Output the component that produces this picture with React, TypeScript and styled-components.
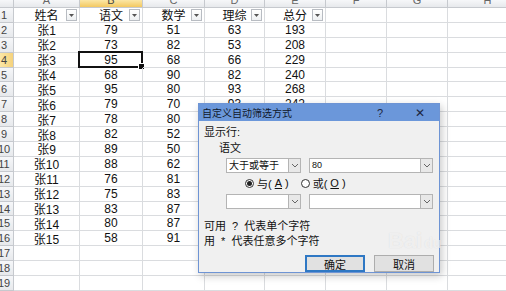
import React from 'react';
import styled, {createGlobalStyle, css} from 'styled-components';

const COLS = [66, 63, 62, 60, 61, 61, 61, 80];
const LETTERS = ['A', 'B', 'C', 'D', 'E', 'F', 'G', 'H'];
const HEADERS = ['姓名', '语文', '数学', '理综', '总分'];
const DATA = [
  ['张1', '79', '51', '63', '193'],
  ['张2', '73', '82', '53', '208'],
  ['张3', '95', '68', '66', '229'],
  ['张4', '68', '90', '82', '240'],
  ['张5', '95', '80', '93', '268'],
  ['张6', '79', '70', '93', '242'],
  ['张7', '78', '80', '', ''],
  ['张8', '82', '52', '', ''],
  ['张9', '89', '50', '', ''],
  ['张10', '88', '62', '', ''],
  ['张11', '76', '81', '', ''],
  ['张12', '75', '83', '', ''],
  ['张13', '83', '87', '', ''],
  ['张14', '80', '87', '', ''],
  ['张15', '58', '91', '', ''],
  ['', '', '', '', ''],
  ['', '', '', '', ''],
  ['', '', '', '', ''],
];
const ACTIVE_ROW = 4;
const ACTIVE_COL = 1;

export default function App() {
  const rows = [HEADERS, ...DATA];

  return (
    <Page>
      <GlobalStyle/>
      <Sheet>
        <Corner/>
        {LETTERS.map((l, i) => (
          <ColHead key={l} $active={i === ACTIVE_COL}><span>{l}</span></ColHead>
        ))}
        {rows.map((row, r) => (
          <React.Fragment key={r}>
            <RowHead $active={r + 1 === ACTIVE_ROW}><span>{r + 1}</span></RowHead>
            {LETTERS.map((_, c) => {
              const text = row[c] ?? '';
              const active = r + 1 === ACTIVE_ROW && c === ACTIVE_COL;
              return (
                <Cell key={c}>
                  {text}
                  {r === 0 && c < 5 && (
                    <FilterButton>
                      <svg width="5" height="3" viewBox="0 0 5 3"><path d="M0 0h5L2.5 3z" fill="#555"/></svg>
                    </FilterButton>
                  )}
                  {active && <Selection><Handle/></Selection>}
                </Cell>
              );
            })}
          </React.Fragment>
        ))}
      </Sheet>

      <Dialog>
        <TitleBar>
          <Title>自定义自动筛选方式</Title>
          <TitleBtn $w={42}>?</TitleBtn>
          <TitleBtn $w={38} $close>✕</TitleBtn>
        </TitleBar>
        <Body>
          <Label>显示行:</Label>
          <FieldName>语文</FieldName>
          <ConditionRow>
            <Combo $w={75}><ComboText>大于或等于</ComboText><Drop/></Combo>
            <Combo $w={124}><ComboText $small>80</ComboText><Drop/></Combo>
          </ConditionRow>
          <RadioRow>
            <RadioOption><Radio $checked/>与(<u>A</u>)</RadioOption>
            <RadioOption><Radio/>或(<u>O</u>)</RadioOption>
          </RadioRow>
          <ConditionRow $gap={4}>
            <Combo $w={75}><ComboText/><Drop/></Combo>
            <Combo $w={124}><ComboText/><Drop/></Combo>
          </ConditionRow>
          <Hints>
            <div>可用  ?  代表单个字符</div>
            <div>用  *  代表任意多个字符</div>
          </Hints>
          <ButtonRow>
            <DlgButton $primary>确定</DlgButton>
            <DlgButton>取消</DlgButton>
          </ButtonRow>
        </Body>
      </Dialog>

      <Watermark>Bai<small>du</small></Watermark>
    </Page>
  );
}

function Drop() {
  return (
    <DropButton>
      <svg width="8" height="5" viewBox="0 0 8 5"><path d="M1 1l3 3 3-3" fill="none" stroke="#666" strokeWidth="1"/></svg>
    </DropButton>
  );
}

const GlobalStyle = createGlobalStyle`
  html, body {
    margin: 0;
    padding: 0;
    background: #fff;
  }
  body {
    font-family: "Liberation Sans", "Noto Sans CJK SC", sans-serif;
  }
`;

const Page = styled.div`
  position: relative;
  width: 506px;
  height: 291px;
  overflow: hidden;
  background: #fff;
`;

const Sheet = styled.div`
  display: grid;
  grid-template-columns: 14px ${COLS.map(w => `${w}px`).join(' ')};
  grid-template-rows: 8px;
  grid-auto-rows: 14.9px;
  color: #111;
  font-size: 12px;
`;

const headBase = css`
  background: linear-gradient(#f6f7f9, #e7e9ec);
  border-right: 1px solid #c6c9ce;
  border-bottom: 1px solid #c6c9ce;
  color: #666;
  overflow: hidden;
  display: flex;
  justify-content: center;
`;

const Corner = styled.div`
  ${headBase};
`;

const ColHead = styled.div<{ $active?: boolean }>`
  ${headBase};
  align-items: flex-end;
  font-size: 11px;
  ${p => p.$active && css`
    background: linear-gradient(#fbe7a6, #f3c860);
    color: #444;
  `}

  span {
    line-height: 10px;
    margin-bottom: 2px;
  }
`;

const RowHead = styled.div<{ $active?: boolean }>`
  ${headBase};
  align-items: center;
  padding-right: 5px;
  font-size: 11px;
  color: #444;
  ${p => p.$active && css`
    background: linear-gradient(90deg, #fbe7a6, #f5d27c);
  `}
`;

const Cell = styled.div`
  position: relative;
  display: flex;
  align-items: center;
  justify-content: center;
  border-right: 1px solid #dadcdf;
  border-bottom: 1px solid #dadcdf;
  white-space: nowrap;
`;

const FilterButton = styled.span`
  position: absolute;
  right: 2px;
  top: 1px;
  width: 9px;
  height: 10px;
  border: 1px solid #b8bcc2;
  background: linear-gradient(#ffffff, #eef0f2);
  display: flex;
  align-items: center;
  justify-content: center;
`;

const Selection = styled.span`
  position: absolute;
  left: -2px;
  top: -2px;
  right: -1px;
  bottom: -1px;
  border: 2px solid #111;
  pointer-events: none;
`;

const Handle = styled.span`
  position: absolute;
  right: -4px;
  bottom: -4px;
  width: 5px;
  height: 5px;
  background: #111;
  border: 1px solid #fff;
`;

const Dialog = styled.div`
  position: absolute;
  left: 198px;
  top: 103px;
  width: 242px;
  height: 170px;
  box-sizing: border-box;
  background: #f0f0f0;
  border: 1px solid #6e94d4;
  box-shadow: 2px 3px 8px rgba(0, 0, 0, 0.22);
  font-size: 11px;
  color: #111;
`;

const TitleBar = styled.div`
  height: 17px;
  display: flex;
  align-items: center;
  background: #6b97da;
  padding-left: 3px;
`;

const Title = styled.div`
  flex: 1;
  font-size: 10px;
  color: #10182a;
`;

const TitleBtn = styled.div<{ $w: number; $close?: boolean }>`
  width: ${p => p.$w}px;
  text-align: center;
  font-size: ${p => (p.$close ? 12 : 11)}px;
  color: #1c2640;
`;

const Body = styled.div`
  padding: 4px 0 0 5px;
`;

const Label = styled.div`
  line-height: 14px;
`;

const FieldName = styled.div`
  line-height: 14px;
  margin: 2px 0 0 15px;
`;

const ConditionRow = styled.div<{ $gap?: number }>`
  display: flex;
  gap: 8px;
  margin: ${p => p.$gap ?? 3}px 0 0 22px;
`;

const Combo = styled.div<{ $w: number }>`
  width: ${p => p.$w}px;
  height: 15px;
  box-sizing: border-box;
  display: flex;
  background: #fff;
  border: 1px solid #b4b4b4;
`;

const ComboText = styled.div<{ $small?: boolean }>`
  flex: 1;
  padding-left: 2px;
  line-height: 13px;
  font-size: ${p => (p.$small ? 9 : 10)}px;
  white-space: nowrap;
  overflow: hidden;
`;

const DropButton = styled.div`
  width: 11px;
  background: #e8e8e8;
  border-left: 1px solid #b4b4b4;
  display: flex;
  align-items: center;
  justify-content: center;
`;

const RadioRow = styled.div`
  display: flex;
  gap: 12px;
  margin: 3px 0 0 41px;
  height: 14px;
  align-items: center;
`;

const RadioOption = styled.label`
  display: flex;
  align-items: center;
  gap: 3px;
`;

const Radio = styled.span<{ $checked?: boolean }>`
  width: 9px;
  height: 9px;
  box-sizing: border-box;
  border-radius: 50%;
  border: 1px solid #333;
  background: #fff;
  display: flex;
  align-items: center;
  justify-content: center;

  &::after {
    content: '';
    width: 5px;
    height: 5px;
    border-radius: 50%;
    background: ${p => (p.$checked ? '#222' : 'transparent')};
  }
`;

const Hints = styled.div`
  margin-top: 10px;
  line-height: 15px;
  white-space: pre;
`;

const ButtonRow = styled.div`
  display: flex;
  gap: 9px;
  margin: 6px 0 0 101px;
`;

const DlgButton = styled.div<{ $primary?: boolean }>`
  width: 60px;
  height: 17px;
  box-sizing: border-box;
  display: flex;
  align-items: center;
  justify-content: center;
  background: #e1e1e1;
  border: 1px solid ${p => (p.$primary ? '#2f78c4' : '#adadad')};
  ${p => p.$primary && css`box-shadow: inset 0 0 0 1px #2f78c4;`}
`;

const Watermark = styled.div`
  position: absolute;
  left: 388px;
  top: 228px;
  font-size: 22px;
  font-weight: bold;
  color: rgba(255, 255, 255, 0.6);
  text-shadow: 0 0 1px rgba(160, 160, 160, 0.3);
  pointer-events: none;

  small {
    font-size: 14px;
    margin-left: 2px;
  }
`;
